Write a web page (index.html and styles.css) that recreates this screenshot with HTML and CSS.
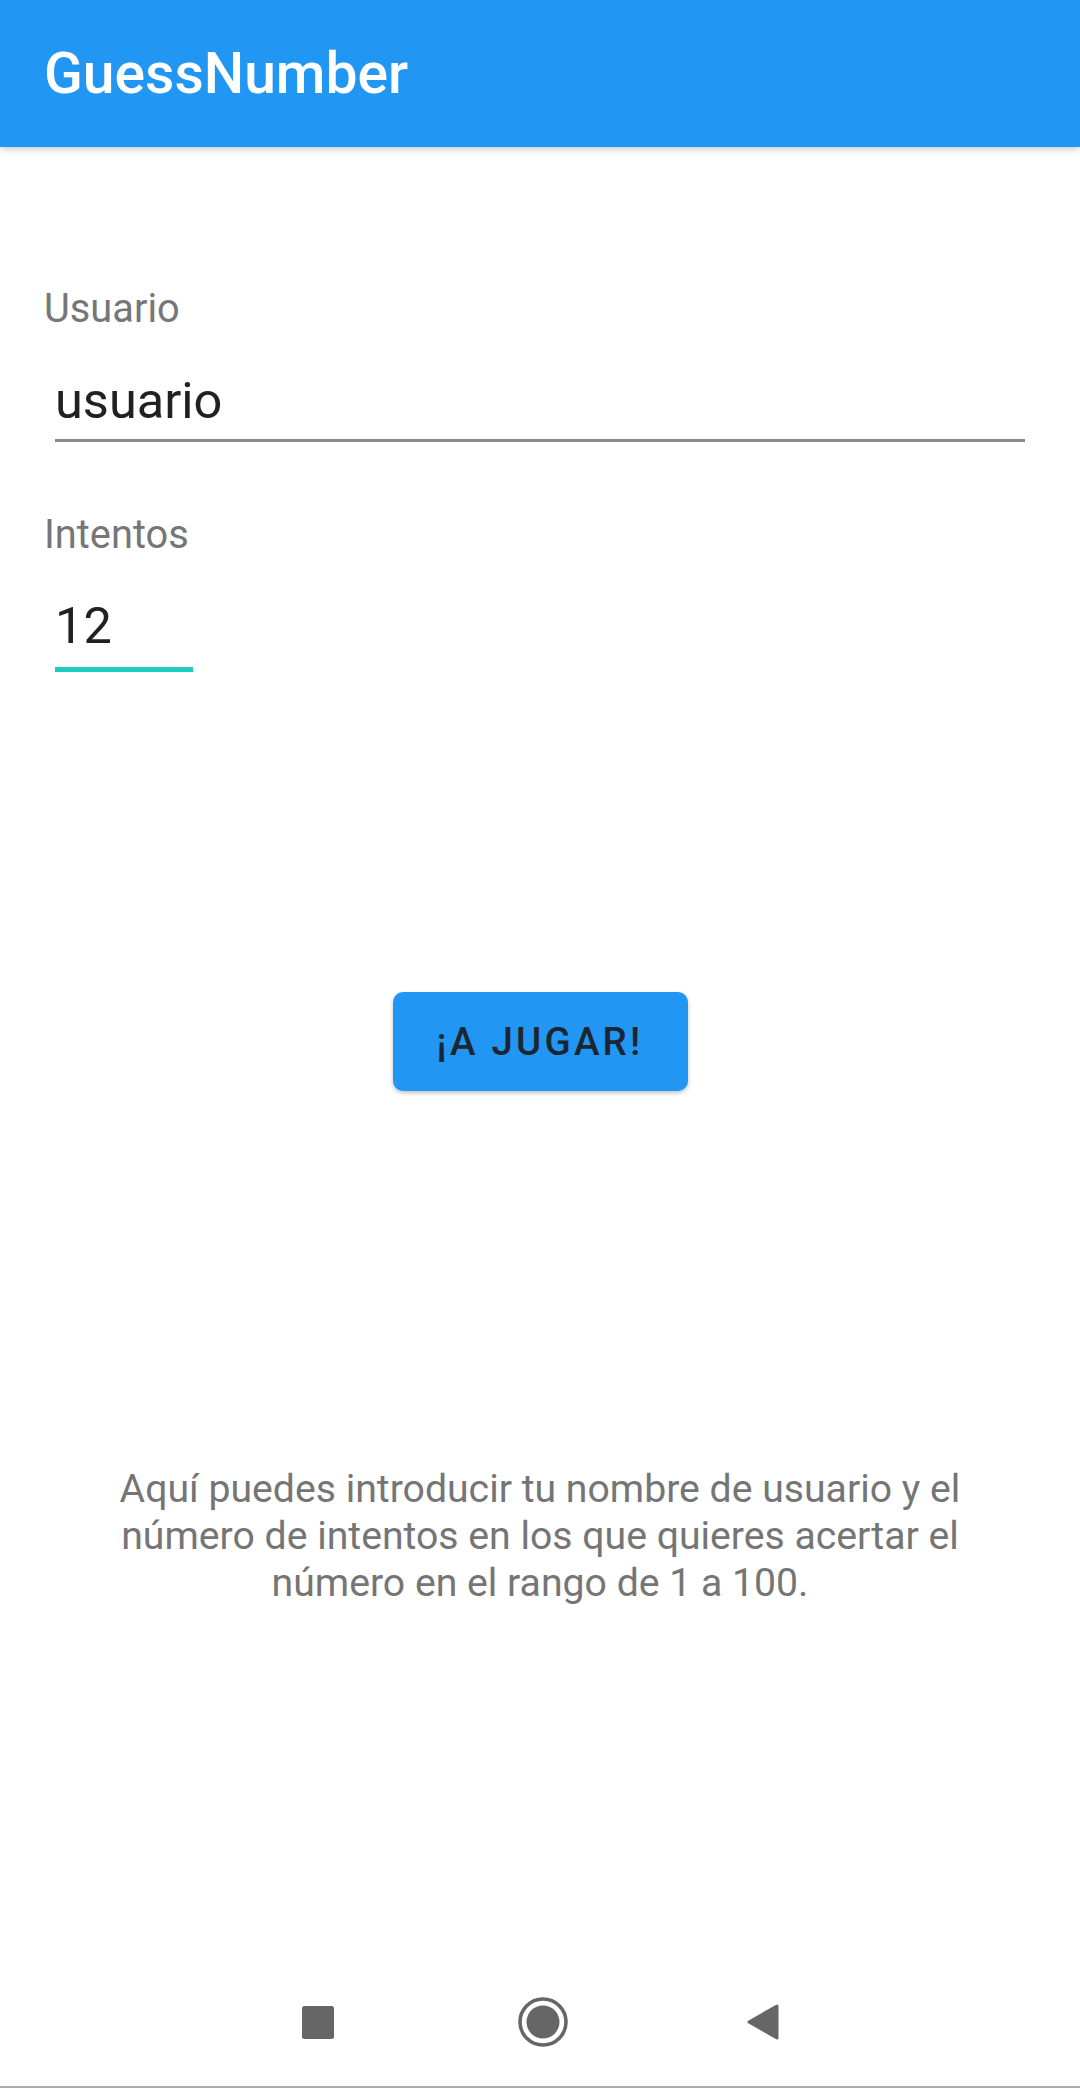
FILE: index.html
```html
<!DOCTYPE html>
<html lang="es">
<head>
<meta charset="utf-8">
<title>GuessNumber</title>
<link rel="stylesheet" href="styles.css">
</head>
<body>
<header class="appbar">
  <h1 class="title">GuessNumber</h1>
</header>
<main class="content">
  <div class="field-label">Usuario</div>
  <div class="field field-wide"><span class="field-value">usuario</span></div>
  <div class="field-label field-label-second">Intentos</div>
  <div class="field field-narrow field-focused"><span class="field-value">12</span></div>
  <div class="actions"><button class="play" type="button">¡A JUGAR!</button></div>
  <p class="help">Aquí puedes introducir tu nombre de usuario y el número de intentos en los que quieres acertar el número en el rango de 1 a 100.</p>
</main>
<nav class="navbar">
  <svg class="nav-icon nav-recents" width="32" height="33" viewBox="0 0 32 33"><rect x="0" y="0" width="32" height="33" rx="2.5" fill="#666"/></svg>
  <svg class="nav-icon nav-home" width="50" height="50" viewBox="0 0 50 50"><circle cx="25" cy="25" r="23" fill="none" stroke="#666" stroke-width="3.6"/><circle cx="25" cy="25" r="16.5" fill="#666"/></svg>
  <svg class="nav-icon nav-back" width="32" height="36" viewBox="0 0 32 36"><polygon points="30,2 30,34 2,18" fill="#666" stroke="#666" stroke-width="3" stroke-linejoin="round"/></svg>
</nav>
</body>
</html>
```
FILE: styles.css
```css
* { box-sizing: border-box; }

html, body {
  margin: 0;
  padding: 0;
}

body {
  width: 1080px;
  height: 2088px;
  display: flex;
  flex-direction: column;
  background: #ffffff;
  font-family: Roboto, "Noto Sans", "Liberation Sans", sans-serif;
  overflow: hidden;
}

.appbar {
  position: relative;
  z-index: 1;
  flex: 0 0 147px;
  height: 147px;
  display: flex;
  align-items: center;
  padding-left: 44px;
  background: #2196f3;
  box-shadow: 0 2px 7px rgba(0, 0, 0, 0.22);
}

.title {
  margin: 0;
  font-size: 57px;
  line-height: 57px;
  font-weight: 500;
  color: #ffffff;
}

.content {
  flex: 1 1 auto;
  padding: 139px 44px 0 44px;
  display: flex;
  flex-direction: column;
}

.field-label {
  font-size: 39.8px;
  line-height: 45px;
  color: #767676;
}

.field-label-second {
  margin-top: 70px;
}

.field {
  margin: 41px 11px 0 11px;
  padding-bottom: 9px;
  border-bottom: 3px solid #8a8a8a;
}

.field-value {
  display: block;
  font-size: 50.5px;
  line-height: 58px;
  color: #212121;
}

.field-narrow {
  align-self: flex-start;
  width: 138px;
  margin-top: 40px;
  padding-bottom: 12px;
}

.field-focused {
  border-bottom: 5px solid #1fcbbd;
}

.actions {
  margin-top: 320px;
  display: flex;
  justify-content: center;
}

.play {
  width: 295px;
  height: 99px;
  padding: 0;
  border: none;
  border-radius: 10px;
  background: #2196f3;
  box-shadow: 0 2px 4px rgba(0, 0, 0, 0.25);
  font-family: Roboto, "Noto Sans", "Liberation Sans", sans-serif;
  font-size: 38.5px;
  font-weight: 500;
  letter-spacing: 3.2px;
  color: #1c2631;
}

.help {
  margin: 375px auto 0 auto;
  max-width: 880px;
  font-size: 39.2px;
  line-height: 47px;
  text-align: center;
  color: #757575;
}

.navbar {
  flex: 0 0 147px;
  height: 147px;
  padding-top: 17px;
  border-bottom: 2px solid #acacac;
  display: flex;
  align-items: center;
  justify-content: center;
}

.nav-recents {
  margin-right: 184px;
}

.nav-home {
  margin-right: 179px;
}
```
